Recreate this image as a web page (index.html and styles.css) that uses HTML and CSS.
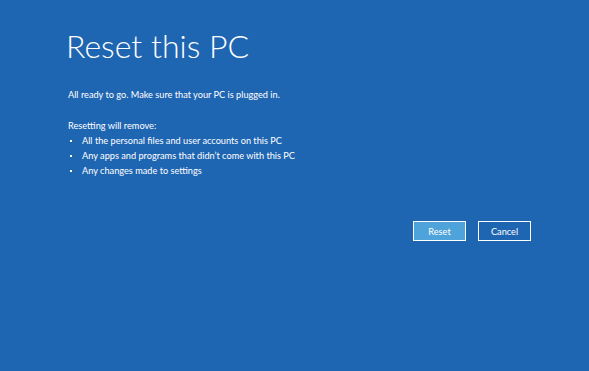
FILE: index.html
```html
<!DOCTYPE html>
<html lang="en">
<head>
  <meta charset="UTF-8">
  <title>Reset this PC</title>
  <link rel="stylesheet" href="styles.css">
</head>
<body>
  <div class="reset-page">
    <h1>Reset this PC</h1>
    <p class="ready">All ready to go. Make sure that your PC is plugged in.</p>

    <p class="remove-title">Resetting will remove:</p>
    <ul class="remove-list">
      <li>All the personal files and user accounts on this PC</li>
      <li>Any apps and programs that didn’t come with this PC</li>
      <li>Any changes made to settings</li>
    </ul>

    <div class="actions">
      <button class="btn btn-primary">Reset</button>
      <button class="btn">Cancel</button>
    </div>
  </div>
</body>
</html>
```

FILE: styles.css
```css
* {
  margin: 0;
  padding: 0;
  box-sizing: border-box;
}

body {
  font-family: Lato, "Open Sans", sans-serif;
  background-color: #1f66b2;
  color: #ffffff;
  width: 589px;
  height: 371px;
  overflow: hidden;
}

.reset-page {
  padding: 26px 0 0 66px;
  width: 531px;
}

h1 {
  font-weight: 300;
  font-size: 32px;
  line-height: 40px;
  margin-bottom: 21px;
}

.ready,
.remove-title,
.remove-list li {
  font-size: 9.2px;
  line-height: 15px;
}

.ready {
  margin-left: 2px;
  margin-bottom: 16px;
}

.remove-title {
  margin-left: 2px;
}

.remove-list {
  list-style: none;
  margin-left: 2px;
}

.remove-list li {
  display: flex;
  align-items: center;
}

.remove-list li::before {
  content: '';
  width: 2px;
  height: 2px;
  background: #ffffff;
  margin: 0 10px 0 2px;
}

.actions {
  display: flex;
  justify-content: flex-end;
  gap: 12px;
  margin-top: 43px;
}

.btn {
  width: 53px;
  height: 20px;
  border: 1px solid #ffffff;
  background: transparent;
  color: #ffffff;
  font-family: Lato, "Open Sans", sans-serif;
  font-size: 9.2px;
  cursor: pointer;
}

.btn-primary {
  background: #4ea3db;
}
```
